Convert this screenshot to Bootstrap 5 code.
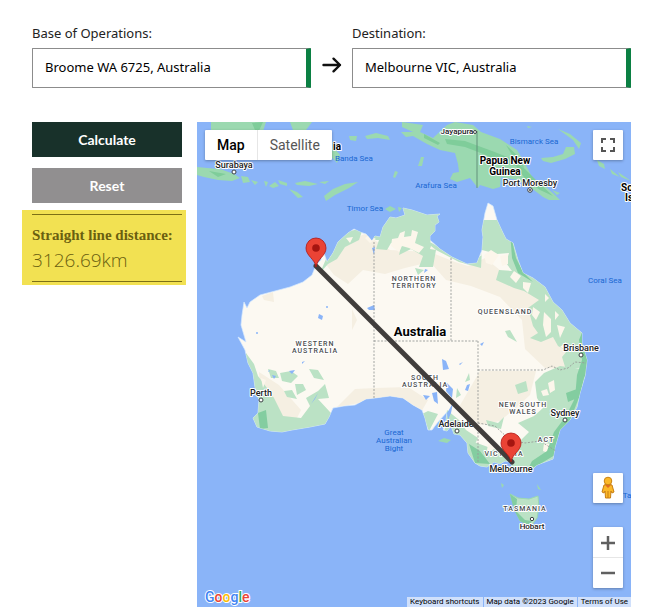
<!DOCTYPE html>
<html lang="en">
<head>
<meta charset="utf-8">
<meta name="viewport" content="width=device-width, initial-scale=1">
<title>Distance calculator</title>
<link href="https://cdn.jsdelivr.net/npm/bootstrap@5.3.0/dist/css/bootstrap.min.css" rel="stylesheet">
<style>
body{font-family:"Noto Sans","Open Sans",sans-serif;color:#222;background:#fff}
.page{padding:24px 19px 8px 32px}
.field label{font-size:13px;line-height:18px;margin-bottom:6px;display:block;color:#222}
.field .form-control{height:40px;border:1px solid #8c8c8c;border-right:5px solid #0b8043;border-radius:1px;padding:0 12px 2px;font-size:13px;color:#000}
.arrow{width:41px;height:40px;padding-bottom:6px}
.tool-row{margin-top:34px;gap:15px}
.side{width:150px;gap:11px}
.side .btn{height:35px;border:0;border-radius:0;color:#fff;font-family:Lato,sans-serif;font-size:14px;font-weight:700;line-height:18px;padding:0}
.btn-calc,.btn-calc:hover{background:#18312a}
.btn-reset,.btn-reset:hover{background:#918f90}
.result{background:#f2e152;margin:-4px -4px 0 -10px;padding:4px 4px 3px 10px;color:#6a5f10}
.result dl{border-top:1px solid #7d7016;border-bottom:1px solid #7d7016;padding:10px 0 6px}
.result dt{font:700 15px/20px "Liberation Serif",serif;white-space:nowrap}
.result dd{font:300 19px/30px "Open Sans","Noto Sans",sans-serif}
.map{font-family:Roboto,sans-serif;background:#8ab4f8}
.map-ctl{position:absolute;background:#fff;box-shadow:0 1px 3px rgba(0,0,0,.3);border-radius:1px}
.map-ctl button{background:none;border:0;padding:0;display:flex;align-items:center;justify-content:center}
.types{left:8px;top:8px;height:30px}
.types button{font-size:14px;color:#565656;padding:0 12px}
.types button:first-child{color:#000;font-weight:500;border-right:1px solid #e6e6e6}
.sq{width:30px}
.sq button{width:30px;height:30px}
.full{right:8px;top:8px}
.peg{right:8px;top:351px}
.zoomer{right:8px;top:405px}
.zoomer button:first-child{height:31px;box-shadow:inset 0 -1px 0 #e6e6e6}
.logo{position:absolute;left:8px;bottom:0;font-size:14px;line-height:20px;font-weight:500;paint-order:stroke;-webkit-text-stroke:2px #fff}
.credits{position:absolute;right:0;bottom:0;font-size:8px;line-height:10px;gap:1px}
.credits>*{background:#d0e0fb;color:#000;text-decoration:none;padding:0 3px;border:0}
.halo{paint-order:stroke;stroke:#fff;stroke-width:2px;stroke-linejoin:round;text-anchor:middle}
.region{letter-spacing:1px}
</style>
</head>
<body>
<main class="page">
<form class="d-flex align-items-end" onsubmit="return false">
  <div class="field flex-fill"><label for="base">Base of Operations:</label><input id="base" class="form-control shadow-none" value="Broome WA 6725, Australia"></div>
  <div class="arrow d-flex align-items-center justify-content-center"><svg width="20" height="16" viewBox="0 0 20 16" fill="none" stroke="#111" stroke-width="2.4" stroke-linecap="round" stroke-linejoin="round" aria-hidden="true"><path d="M1.5 8H18M11.5 1.7 18 8l-6.500 6.300"/></svg></div>
  <div class="field flex-fill"><label for="dest">Destination:</label><input id="dest" class="form-control shadow-none" value="Melbourne VIC, Australia"></div>
</form>
<div class="tool-row d-flex align-items-start">
  <div class="side d-flex flex-column flex-shrink-0">
    <button class="btn btn-calc" type="button">Calculate</button>
    <button class="btn btn-reset" type="button">Reset</button>
    <div class="result"><dl class="mb-0"><dt>Straight line distance:</dt><dd class="mb-0">3126.69km</dd></dl></div>
  </div>
  <section class="map position-relative flex-fill overflow-hidden" aria-label="Map">
    <svg class="d-block w-100 h-auto" viewBox="197 122 434 485">
      <defs>
        <path id="aus" d="M316 265 312 275 303 282 290 287 275 291 260 295 250 302 247 308 244 302 242 315 241 325 246 342 238 337 245 350 248 363 253 373 255 387 259 400 258 413 253 418 257 427 270 431 282 432 292 430 310 427 325 424 329 417 333 408 344 406 355 405 366 399 375 398 390 396 403 398 413 405 422 410 425 418 428 430 432 430 438 422 447 412 446 420 443 430 447 431 451 426 454 434 460 435 467 443 468 453 475 463 480 466 487 467 494 462 500 464 505 461 511 462 512 467 517 468 528 473 537 465 553 459 555 447 560 430 570 420 577 407 580 393 585 376 587 360 582 343 582 333 570 323 562 310 553 302 545 287 533 278 523 273 518 260 513 243 506 239 503 233 497 220 493 206 488 203 485 213 482 230 483 237 482 250 477 263 467 264 452 257 440 249 430 240 430 236 435 231 435 225 439 222 437 216 440 214 427 215 412 210 403 208 405 215 396 218 390 217 383 227 380 237 375 236 372 241 366 234 360 232 354 229 348 233 338 242 333 253 327 262 323 250 321 260Z"/>
        <clipPath id="land"><use href="#aus"/></clipPath>
        <g id="pin"><path d="M0 0C-1-8-10-11-10-19A10 10 0 0 1 10-19C10-11 1-8 0 0Z" fill="#ea4335" stroke="#b31412" stroke-width=".8"/><circle cy="-19" r="3.800" fill="#a51510"/></g>
      </defs>
      <path fill="#8ab4f8" d="M197 122h434v485H197z"/>
      <!-- islands to the north -->
      <g fill="#9bd9b0">
        <path d="M211 122H266L262 134 253 139 240 135 225 141 211 131ZM290 122H312L306 130H293ZM197 167 207 168 220 169 234 174 240 178 232 181 218 180 204 177 197 175ZM241 176 248 177 250 182 243 183ZM251 180 258 182 255 185ZM264 181 268 182 266 187ZM269 186 275 182 279 186 273 188ZM278 180 287 183 287 186 280 184ZM295 183 305 181 318 184 309 186 297 185ZM319 182 329 181 325 184ZM289 189 297 192 303 197 298 198ZM324 196 333 189 345 184 358 182 349 188 335 195 326 201ZM326 151 334 148 340 155 337 163ZM349 136 357 136 356 141 350 140ZM365 136 376 133 388 136 390 140 378 138 367 139ZM418 166 421 157 424 157 422 166ZM393 177 395 171 398 172 395 178ZM385 209 390 206 396 209 390 212ZM398 207 402 208 399 212ZM541 158 553 157 563 154 566 147 574 147 575 154 565 159 551 163 543 161ZM558 129 570 134 581 143 579 149 573 140ZM597 160 604 164 605 169 599 166ZM610 169 620 177 612 174ZM622 181 631 189 624 185ZM552 190 560 193 557 195ZM527 126 532 127 528 128ZM618 172 631 181 621 177Z"/>
        <path d="M402 122 423 125 420 132 433 138 447 125 455 122 473 125 481 132 500 139 517 150 523 160 530 173 533 180 546 187 555 195 560 200 549 200 543 197 530 187 517 180 501 177 500 187 493 189 480 185 478 188 470 178 457 182 450 179 453 173 459 172 458 164 455 153 440 150 427 144 413 136 406 137 401 132 413 132 402 127Z"/>
      </g>
      <g fill="#7fcd9a"><path d="M445 139 465 141 492 151 510 158 516 166 502 164 486 155 465 147 447 144ZM511 159 525 169 538 182 553 196 540 190 526 180ZM506 145 521 159 524 168 515 160ZM424 134 440 143 438 145 424 138ZM252 123 263 122 257 135ZM209 171 226 174 218 177Z"/></g>
      <path d="M477 131V188" stroke="#62917a" fill="none"/>
      <!-- mainland and its vegetation -->
      <use href="#aus" fill="#fcf9f2" stroke="#d6e9ff" stroke-width=".7"/>
      <g clip-path="url(#land)">
        <path fill="#f5efe2" d="M325 263 340 244 365 234 390 250 430 252 455 262 468 266 485 258 506 275 535 285 555 310 568 334 565 369 545 368 525 349 522 320 500 297 471 286 446 280 430 262 405 268 385 274 363 270 348 284 334 275ZM259 372 279 385 301 410 297 418 282 418 273 402 260 388ZM337 407 355 389 375 388 408 387 428 400 420 414 390 398 365 402ZM480 371 505 371 536 371 530 395 517 407 500 421 480 425 459 407ZM262 296 273 292 274 302 264 300ZM352 309 357 320 352 330Z"/>
        <path fill="#bbe2c5" d="M320 273 326 259 339 239 350 231 363 228 359 240 345 247 337 259 328 264ZM366 232 373 240 379 240 376 249 387 250 391 243 402 242 399 255 411 249 423 256 419 267 433 267 436 250 459 262 481 268 482 250 497 254 509 253 506 263 512 271 499 270 496 280 514 288 524 291 539 300 528 308 533 326 538 333 530 338 541 342 553 337 558 346 567 351 562 357 566 370 595 365V310L545 270 520 220H480L482 255 468 264 430 242 450 220 430 200H378Z"/>
        <path fill="#bbe2c5" d="M246 353 254 364 258 376 267 388 274 398 283 416 301 418 310 406 306 398 318 391 325 384 329 398 318 399 330 412 335 418V440H246ZM544 373 560 366 589 370 583 418 557 480 469 478 464 440 477 443 496 450 517 444 529 432 518 423 534 416 543 408 537 398 535 382ZM428 411 438 414 429 431 422 414ZM447 410 459 420 466 430 478 438 474 446 444 434ZM268 369 276 371 279 378 271 378ZM280 373 291 371 298 376 291 383 282 381ZM295 384 303 384 306 390 297 395ZM309 369 318 370 324 380 314 378ZM284 391 292 390 297 399 287 397ZM505 331 510 330 517 342 508 337ZM515 385 526 381 528 391 518 394ZM521 405 528 401 528 408ZM457 388 461 395 456 398ZM465 382 469 373 470 380ZM486 420 498 423 504 417 501 429 488 426ZM415 268 424 270 418 275Z"/>
        <path fill="#fcf6eb" d="M484 255 491 250 499 255 492 265 486 263ZM500 256 508 254 508 264 502 266ZM514 271 521 276 516 283 510 277ZM523 282 531 283 528 293 523 288ZM544 312 551 319 551 332 546 337 543 325ZM533 307 540 312 536 320 532 315ZM557 325 565 327 560 338ZM545 294 549 298 545 302ZM555 311 559 315 555 320ZM560 347 566 342 567 350ZM392 239 398 238 400 233 405 231 404 237 411 236 412 230 418 232 415 243 424 247 419 253 409 248 402 246 399 252 391 246ZM431 246 436 250 430 249ZM548 383 554 380 555 390 550 393ZM541 391 547 389 549 395 543 396ZM544 443 551 444 548 453 543 451ZM488 444 498 443 493 450 487 450ZM261 378 266 380 263 388ZM369 235 376 239 370 243 365 238ZM346 238 353 237 350 243Z"/>
        <path fill="#83cda0" d="M583 330 589 367 584 378 580 395 569 423 559 437 555 455 540 464 527 471 532 461 547 451 554 432 566 416 575 398 577 375 582 360 579 340ZM258 413 266 410 268 428 260 429ZM469 444 480 451 490 464 475 463ZM510 231 516 258 523 272 533 282 518 273 512 258ZM566 393 577 389 575 399 568 402Z"/>
        <g fill="#8ab4f8"><path d="M319 314 323 316 322 320 318 318ZM367 308 374 305 375 310 369 310ZM372 248 375 247 374 255ZM442 359 446 361 449 369 443 370ZM447 383 453 389 452 398 446 391ZM432 393 437 392 438 404 434 401ZM423 395 430 396 426 400ZM467 385 470 384 468 391 465 390ZM447 413 453 403 451 413 448 420ZM318 393 315 399 311 404ZM289 371 295 370 292 374ZM302 362 305 361 302 364ZM425 269 428 270 424 273ZM480 344 484 342 482 346ZM272 375 276 376 274 379ZM269 370 270 371 268 372ZM459 364 463 362 460 365Z"/><circle cx="327" cy="307" r="1"/><circle cx="257" cy="333" r="1"/></g>
      </g>
      <path fill="#bbe2c5" stroke="#9bd9b0" d="M510 494 518 498 529 499 538 496 539 507 537 518 532 525 520 521 515 509Z"/>
      <path fill="#83cda0" d="M510 494 517 499 516 511 525 520 532 521 529 526 520 521 514 510Z"/>
      <path fill="#9bd9b0" d="M438 441 444 438 451 440 447 443ZM501 483 504 485 502 488ZM537 484 541 490 538 489Z"/>
      <path d="M374 242V398M451 258V341M374 341H478M478 341V462M478 370H543L552 366 560 370 568 368 575 362 586 363M478 423 495 426 510 440 525 443 540 441 556 451" stroke="#999b98" stroke-width=".9" stroke-dasharray="2 1.500" fill="none"/>
      <!-- place names -->
      <g class="halo" font-size="9" font-weight="500" fill="#202124">
        <text x="234" y="168">Surabaya</text><text x="457" y="134" font-size="8">Jayapura</text><text x="530" y="186">Port Moresby</text><text x="581" y="351">Brisbane</text><text x="565" y="416">Sydney</text><text x="261" y="396">Perth</text><text x="456" y="427">Adelaide</text>
        <text x="532" y="529" font-size="8">Hobart</text>
        <g font-weight="700" fill="#000"><text x="505" y="164" font-size="10">Papua New</text><text x="505" y="175" font-size="10">Guinea</text><text x="420" y="336" font-size="13">Australia</text><text x="627" y="191" font-size="10">So</text><text x="629" y="201" font-size="10">Is</text><text x="337" y="150" font-size="10">ia</text></g>
      </g>
      <g fill="#1967d2" font-size="8" text-anchor="middle"><text x="354" y="161">Banda Sea</text><text x="436" y="188">Arafura Sea</text><text x="365" y="211">Timor Sea</text><text x="534" y="144">Bismarck Sea</text><text x="605" y="283">Coral Sea</text><text x="394" y="435">Great</text><text x="394" y="443">Australian</text><text x="394" y="451">Bight</text><text x="627" y="498">Ta</text></g>
      <g class="halo region" fill="#4b4e50" font-size="7" font-weight="500"><text x="414" y="281">NORTHERN</text><text x="414" y="288">TERRITORY</text><text x="505" y="314">QUEENSLAND</text><text x="315" y="346">WESTERN</text><text x="315" y="353">AUSTRALIA</text><text x="425" y="380">SOUTH</text><text x="425" y="387">AUSTRALIA</text><text x="523" y="407">NEW SOUTH</text><text x="523" y="414">WALES</text><text x="546" y="442">ACT</text><text x="504" y="456">VICTORIA</text><text x="525" y="511">TASMANIA</text></g>
      <g fill="#fff" stroke="#3c4043"><circle cx="234" cy="172" r="2"/><circle cx="475" cy="132" r="1.500"/><circle cx="530" cy="190" r="2.300"/><circle cx="581" cy="355" r="2"/><circle cx="565" cy="420" r="2"/><circle cx="261" cy="400" r="2"/><circle cx="457" cy="431" r="2"/><circle cx="532" cy="519" r="1.700"/></g>
      <circle cx="530" cy="190" r="1" fill="#3c4043"/>
      <path d="M316 266 512 462" stroke="#403d3c" stroke-width="5" stroke-linecap="round"/>
      <use href="#pin" x="316" y="267"/><use href="#pin" x="511" y="462"/>
      <text class="halo" x="511" y="472" font-size="9" font-weight="500" fill="#202124">Melbourne</text>
    </svg>
    <div class="map-ctl types d-flex"><button type="button">Map</button><button type="button">Satellite</button></div>
    <div class="map-ctl sq full"><button type="button" aria-label="Full screen"><svg width="14" height="14" viewBox="0 0 14 14" fill="none" stroke="#555" stroke-width="2"><path d="M1 5V1h4M9 1h4v4M13 9v4H9M5 13H1V9"/></svg></button></div>
    <div class="map-ctl sq peg"><button type="button" aria-label="Street View"><svg width="16" height="24" viewBox="0 0 16 24"><path d="M4 9Q8 7 12 9L14 16 12 17 11 15 10.500 22H5.500L5 15 4 17 2 16Z" fill="#fbb829" stroke="#c77d12"/><path d="M8 15V22" stroke="#c77d12"/><path d="m5 9 3 3 3-3Z" fill="#e06b23"/><circle cx="8" cy="5" r="3.800" fill="#fbb829" stroke="#c98212"/></svg></button></div>
    <div class="map-ctl sq zoomer"><button type="button" aria-label="Zoom in"><svg width="14" height="14" viewBox="0 0 14 14" stroke="#606060" stroke-width="2.500"><path d="M0 7h14M7 0v14"/></svg></button><button type="button" aria-label="Zoom out"><svg width="14" height="14" viewBox="0 0 14 14" stroke="#606060" stroke-width="2.500"><path d="M0 7h14"/></svg></button></div>
    <div class="logo"><span style="color:#4285f4">G</span><span style="color:#ea4335">o</span><span style="color:#fbbc04">o</span><span style="color:#4285f4">g</span><span style="color:#34a853">l</span><span style="color:#ea4335">e</span></div>
    <div class="credits d-flex"><button type="button">Keyboard shortcuts</button><span>Map data ©2023 Google</span><a href="#">Terms of Use</a></div>
  </section>
</div>
</main>
<script src="https://cdn.jsdelivr.net/npm/bootstrap@5.3.0/dist/js/bootstrap.bundle.min.js"></script>
</body>
</html>
